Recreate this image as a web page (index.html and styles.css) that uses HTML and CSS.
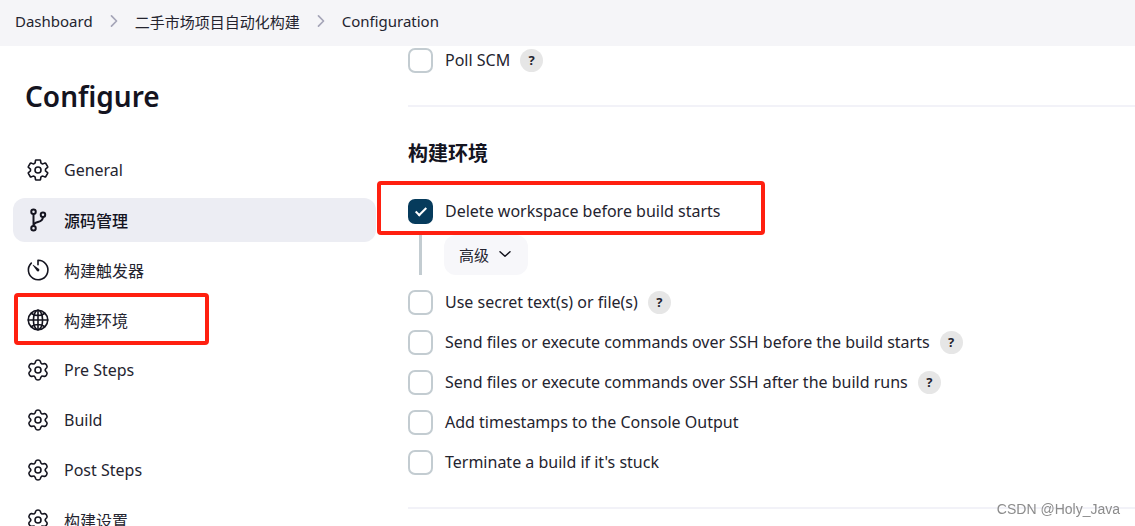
FILE: index.html
```html
<!DOCTYPE html>
<html lang="zh-CN">
<head>
  <meta charset="UTF-8">
  <title>Configuration</title>
  <link rel="stylesheet" href="styles.css">
</head>
<body>
  <svg class="sprite" aria-hidden="true">
    <symbol id="gear" viewBox="0 0 512 512">
      <circle cx="256" cy="256" r="64"/>
      <path d="M416.39 256a154.34 154.34 0 01-1.53 20.79l45.21 35.46a10.81 10.81 0 012.45 13.75l-42.77 74a10.81 10.81 0 01-13.14 4.59l-44.9-18.08a16.11 16.11 0 00-15.17 1.75A164.48 164.48 0 01325 400.8a15.94 15.94 0 00-8.82 12.14l-6.73 47.89a11.08 11.08 0 01-10.68 9.17h-85.54a11.11 11.11 0 01-10.69-8.87l-6.72-47.82a16.07 16.07 0 00-9-12.22 155.3 155.3 0 01-21.46-12.57 16 16 0 00-15.11-1.71l-44.89 18.07a10.81 10.81 0 01-13.14-4.58l-42.77-74a10.8 10.8 0 012.45-13.75l38.21-30a16.05 16.05 0 006-14.08c-.36-4.17-.58-8.33-.58-12.5s.21-8.27.58-12.35a16 16 0 00-6.07-13.94l-38.19-30A10.81 10.81 0 0149.48 186l42.77-74a10.81 10.81 0 0113.14-4.59l44.9 18.08a16.11 16.11 0 0015.17-1.75A164.48 164.48 0 01187 111.2a15.94 15.94 0 008.82-12.14l6.73-47.89A11.08 11.08 0 01213.23 42h85.54a11.11 11.11 0 0110.69 8.87l6.72 47.82a16.07 16.07 0 009 12.22 155.3 155.3 0 0121.46 12.57 16 16 0 0015.11 1.71l44.89-18.07a10.81 10.81 0 0113.14 4.58l42.77 74a10.8 10.8 0 01-2.45 13.75l-38.21 30a16.05 16.05 0 00-6.05 14.08c.33 4.14.55 8.3.55 12.47z"/>
    </symbol>
    <path id="tooth" d="M178 121C204 106 198 92 206 70C214 50 232 44 256 44C280 44 298 50 306 70C314 92 308 106 334 121"/>
    <symbol id="cog" viewBox="0 0 512 512">
      <circle cx="256" cy="256" r="64"/>
      <use href="#tooth"/>
      <use href="#tooth" transform="rotate(60 256 256)"/>
      <use href="#tooth" transform="rotate(120 256 256)"/>
      <use href="#tooth" transform="rotate(180 256 256)"/>
      <use href="#tooth" transform="rotate(240 256 256)"/>
      <use href="#tooth" transform="rotate(300 256 256)"/>
    </symbol>
    <symbol id="branch" viewBox="0 0 512 512">
      <circle cx="160" cy="80" r="48"/>
      <circle cx="160" cy="432" r="48"/>
      <circle cx="362" cy="144" r="48"/>
      <path d="M160 384V128M362 192c0 148-202 70-202 192"/>
    </symbol>
    <symbol id="timer" viewBox="0 0 512 512">
      <path d="M113 108a208 208 0 10143-60v96"/>
      <path class="solid" d="M233 279l-89-127a6 6 0 018-8l127 89a33 33 0 01-46 46z"/>
    </symbol>
    <symbol id="globe" viewBox="0 0 512 512">
      <circle cx="256" cy="256" r="208"/>
      <ellipse cx="256" cy="256" rx="98" ry="208"/>
      <path d="M256 48v416M48 256h416M117 117c38 27 87 44 139 44s101-17 139-44M117 395c38-27 87-44 139-44s101 17 139 44"/>
    </symbol>
    <symbol id="chevron" viewBox="0 0 512 512">
      <path d="M184 112l144 144-144 144"/>
    </symbol>
    <symbol id="chevron-down" viewBox="0 0 512 512">
      <path d="M96 184l160 144 160-144"/>
    </symbol>
  </svg>

  <header class="breadcrumbs">
    <a href="#">Dashboard</a>
    <svg><use href="#chevron"/></svg>
    <a href="#">二手市场项目自动化构建</a>
    <svg><use href="#chevron"/></svg>
    <a href="#">Configuration</a>
  </header>

  <div class="page">
    <aside class="sidebar">
      <h1>Configure</h1>
      <nav class="tasks">
        <a href="#"><svg><use href="#gear"/></svg>General</a>
        <a href="#" class="active"><svg><use href="#branch"/></svg>源码管理</a>
        <a href="#"><svg><use href="#timer"/></svg>构建触发器</a>
        <a href="#env" class="marked"><svg><use href="#globe"/></svg>构建环境</a>
        <a href="#"><svg><use href="#cog"/></svg>Pre Steps</a>
        <a href="#"><svg><use href="#cog"/></svg>Build</a>
        <a href="#"><svg><use href="#cog"/></svg>Post Steps</a>
        <a href="#"><svg><use href="#cog"/></svg>构建设置</a>
      </nav>
    </aside>

    <main>
      <section>
        <div class="option">
          <input type="checkbox" id="poll"><label for="poll">Poll SCM</label>
          <button type="button" class="help">?</button>
        </div>
      </section>

      <section id="env">
        <h2>构建环境</h2>
        <div class="option marked">
          <input type="checkbox" id="delete" checked><label for="delete">Delete workspace before build starts</label>
        </div>
        <div class="nested">
          <button type="button" class="advanced">高级<svg><use href="#chevron-down"/></svg></button>
        </div>
        <div class="option">
          <input type="checkbox" id="secret"><label for="secret">Use secret text(s) or file(s)</label>
          <button type="button" class="help">?</button>
        </div>
        <div class="option">
          <input type="checkbox" id="ssh-before"><label for="ssh-before">Send files or execute commands over SSH before the build starts</label>
          <button type="button" class="help">?</button>
        </div>
        <div class="option">
          <input type="checkbox" id="ssh-after"><label for="ssh-after">Send files or execute commands over SSH after the build runs</label>
          <button type="button" class="help">?</button>
        </div>
        <div class="option">
          <input type="checkbox" id="timestamps"><label for="timestamps">Add timestamps to the Console Output</label>
        </div>
        <div class="option">
          <input type="checkbox" id="stuck"><label for="stuck">Terminate a build if it's stuck</label>
        </div>
      </section>
    </main>
  </div>

  <div class="watermark">CSDN @Holy_Java</div>
</body>
</html>
```
FILE: styles.css
```css
*, *::after {
  box-sizing: border-box;
}

body {
  margin: 0;
  height: 100vh;
  overflow: hidden;
  display: flex;
  flex-direction: column;
  font-family: "Noto Sans", "Noto Sans CJK SC", sans-serif;
  font-size: 16px;
  color: #24242f;
  background: #fff;
}

a {
  color: inherit;
  text-decoration: none;
}

svg {
  fill: none;
  stroke: #14141f;
  stroke-width: 34px;
  stroke-linecap: round;
  stroke-linejoin: round;
}

.solid {
  fill: #14141f;
  stroke: none;
}

.sprite {
  position: absolute;
  width: 0;
  height: 0;
}

.breadcrumbs {
  flex: none;
  display: flex;
  align-items: center;
  gap: 12px;
  height: 46px;
  padding: 0 15px 4px;
  font-size: 15px;
  background: #f5f5f8;
}

.breadcrumbs svg {
  width: 18px;
  height: 18px;
  stroke: #a5a5b8;
  stroke-width: 48px;
}

.page {
  flex: 1;
  min-height: 0;
  display: flex;
  gap: 32px;
}

.sidebar {
  flex: none;
  width: 376px;
  padding-left: 13px;
}

h1, h2 {
  color: #14141f;
}

h1 {
  margin: 30px 0 32px 12px;
  font-size: 28px;
  font-weight: 600;
  line-height: 40px;
}

.tasks {
  display: flex;
  flex-direction: column;
  gap: 6px;
}

.tasks a {
  position: relative;
  display: flex;
  align-items: center;
  gap: 14px;
  height: 44px;
  padding: 0 13px;
  border-radius: 12px;
}

.tasks svg {
  width: 24px;
  height: 24px;
}

.tasks .active {
  font-weight: 500;
  color: #14141f;
  background: #ecedf3;
}

.tasks .active svg {
  stroke-width: 42px;
}

/* red frames around the steps to follow */
.marked::after {
  content: "";
  position: absolute;
  border: 4px solid #ff2010;
  border-radius: 4px;
  pointer-events: none;
}

.tasks .marked::after {
  left: 1px;
  top: -5px;
  width: 195px;
  height: 52px;
}

.option.marked::after {
  left: -31px;
  top: -16px;
  width: 388px;
  height: 54px;
}

main {
  flex: 1;
  min-width: 0;
}

section {
  padding-bottom: 19px;
  border-bottom: 2px solid #f2f2f8;
}

h2 {
  margin: 32px 0 28px;
  font-size: 20px;
  line-height: 30px;
}

.option {
  position: relative;
  display: flex;
  align-items: center;
  height: 28px;
  margin-bottom: 12px;
}

.option input {
  appearance: none;
  width: 25px;
  height: 25px;
  margin: 0 12px 0 0;
  border: 2px solid #c3ccd1;
  border-radius: 7px;
}

.option input:checked {
  border: none;
  background: #063b5c;
}

.option input:checked::after {
  content: "";
  display: block;
  width: 6px;
  height: 11px;
  margin: 6px 0 0 10px;
  border: solid #fff;
  border-width: 0 2px 2px 0;
  transform: rotate(45deg);
}

button {
  border: none;
  font-family: inherit;
  color: inherit;
}

.help {
  width: 23px;
  height: 23px;
  margin-left: 10px;
  padding: 0;
  border-radius: 50%;
  font-size: 13px;
  font-weight: 700;
  background: #e6e6e6;
}

.nested {
  margin: -2px 0 13px 11px;
  padding-left: 22px;
  border-left: 3px solid #c3ccd1;
}

.advanced {
  display: flex;
  align-items: center;
  gap: 8px;
  height: 40px;
  padding: 0 15px 2px;
  border-radius: 12px;
  font-size: 15px;
  background: #f7f7fa;
}

.advanced svg {
  width: 16px;
  height: 16px;
  stroke-width: 48px;
}

.watermark {
  position: fixed;
  right: 15px;
  bottom: 8px;
  font: 14px/18px "Liberation Sans", sans-serif;
  color: #8c8c8c;
}
```
